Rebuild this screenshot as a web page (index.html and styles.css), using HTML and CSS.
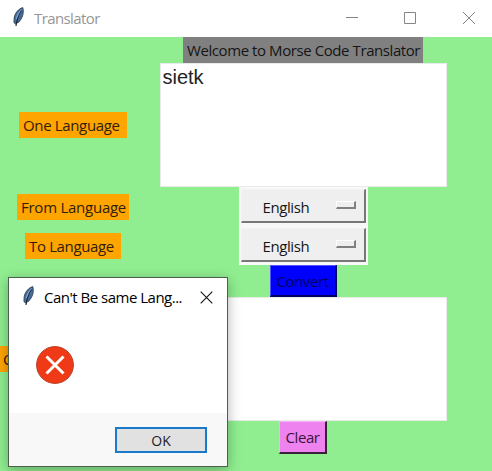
FILE: index.html
```html
<!DOCTYPE html>
<html lang="en">
<head>
<meta charset="utf-8">
<title>Translator</title>
<link rel="stylesheet" href="styles.css">
</head>
<body>
<svg class="defs" width="0" height="0" aria-hidden="true">
  <symbol id="feather" viewBox="0 0 14 20">
    <path d="M11.800.6C8 1.500 4 6 3.200 10.500L2.900 15.500l1.500 1.400 3.600-2C11.400 11 13.300 6 11.800.6Z" fill="#456d9f" stroke="#263348" stroke-width=".8"/>
    <path d="M10.700 2C7.500 4.500 5.500 8.500 4.700 13l2-2.400C9.200 8 10.700 5 10.700 2Z" fill="#91b5df"/>
    <path d="M10.500 3.500C7.500 8 5.800 13 5 19" fill="none" stroke="#172332" stroke-width="1.100"/>
  </symbol>
</svg>
<main class="window">
  <header class="titlebar">
    <svg class="feather"><use href="#feather"/></svg>
    <h1 class="title">Translator</h1>
    <svg class="controls" viewBox="0 0 146 36" fill="none" stroke="#858585">
      <path d="M0 17.500h12M58.500 12.500h11v11h-11zM117 12l12 12M129 12l-12 12"/>
    </svg>
  </header>
  <section class="form">
    <div class="label welcome">Welcome to Morse Code Translator</div>
    <div class="label tag one">One Language</div>
    <div class="textbox">sietk</div>
    <div class="label tag from">From Language</div>
    <div class="option"><div class="menu"><span>English</span><i class="indicator"></i></div></div>
    <div class="label tag to">To Language</div>
    <div class="option"><div class="menu"><span>English</span><i class="indicator"></i></div></div>
    <button class="button convert">Convert</button>
    <div class="label tag converted">Converted Language</div>
    <div class="textbox"></div>
    <button class="button clear">Clear</button>
  </section>
  <section class="dialog">
    <header class="dialog-bar">
      <svg class="feather"><use href="#feather"/></svg>
      <h2 class="dialog-title">Can't Be same Lang...</h2>
      <svg class="close" viewBox="0 0 13 13"><path d="M.7.700l11.600 11.600M12.300.700L.7 12.300" stroke="#111" stroke-width="1.100"/></svg>
    </header>
    <div class="dialog-body">
      <svg class="error" viewBox="0 0 38 38">
        <circle cx="19" cy="19" r="18.400" fill="#f03a17" stroke="#b83e26" stroke-width="1"/>
        <path d="M10.500 10.500l17 17M27.500 10.500l-17 17" stroke="#fff" stroke-width="3"/>
      </svg>
    </div>
    <footer class="dialog-footer"><button class="ok">OK</button></footer>
  </section>
</main>
</body>
</html>
```
FILE: styles.css
```css
* { box-sizing: border-box; }
body {
  margin: 0;
  overflow: hidden;
  font: 15px/20px "Open Sans", "Noto Sans", sans-serif;
  letter-spacing: -0.42px;
  color: #151515;
}
.defs { position: absolute; }
.window { position: relative; width: 492px; height: 471px; overflow: hidden; background: #90ee90; }
.titlebar { display: flex; height: 37px; padding-left: 11px; background: #fff; }
.feather { width: 14px; height: 20px; margin-top: 7px; flex: none; }
.title { margin: 8px 0 0 9px; font-size: 15px; font-weight: 400; letter-spacing: -0.6px; color: #969696; }
.controls { width: 146px; height: 36px; margin-left: auto; }
.form {
  display: grid;
  grid-template-columns: 146px 314px;
  grid-template-rows: 26px 124px 39px 39px 32px 124px 33px;
  place-items: center;
}
.label { height: 26px; padding-left: 4px; line-height: 26px; white-space: nowrap; }
.welcome { grid-column: 2; width: 240px; background: #808080; }
.tag { background: #ffa500; color: #30200b; letter-spacing: -0.35px; }
.one { width: 108px; }
.from { width: 112px; letter-spacing: -0.25px; }
.to { width: 96px; }
.converted { width: 146px; padding-left: 3px; }
.textbox {
  width: 287px;
  height: 124px;
  padding: 2px 2px;
  border: 1px solid #e8ece8;
  background: #fff;
  font: 20px/22px "Liberation Sans", sans-serif;
  letter-spacing: 0;
  color: #222;
}
.option { width: 129px; height: 39px; padding: 2px; background: #f8f8f8; }
.menu {
  display: flex;
  align-items: center;
  justify-content: space-between;
  height: 34px;
  padding: 2px 8px 0 21px;
  border: solid;
  border-color: #f2f2f2 #777 #777 #f2f2f2;
  border-width: 1px 2px 2px 1px;
  background: #efefef;
}
.indicator { width: 20px; height: 8px; margin-bottom: 3px; border: solid; border-width: 1px 2px 2px 1px; border-color: #fff #808080 #808080 #fff; }
.button { padding: 0; border: 2px solid; font: inherit; letter-spacing: inherit; }
.convert { grid-column: 2; width: 67px; height: 32px; background: #00f; border-color: #5353ff #000060 #000060 #5353ff; border-width: 1px 2px 2px 1px; color: #000060; }
.clear { grid-column: 2; width: 48px; height: 33px; background: #ee82ee; border-color: #f6b4f6 #382038 #382038 #f6b4f6; border-width: 1px 2px 2px 1px; color: #3b153b; }
.dialog {
  position: absolute;
  left: 8px;
  top: 277px;
  width: 220px;
  height: 190px;
  border: 1px solid #4d604d;
  background: #fff;
  box-shadow: 0 3px 12px rgba(0, 0, 0, .3);
}
.dialog-bar { display: flex; padding-left: 12px; }
.dialog-bar .feather { margin-top: 8px; }
.dialog-title { margin: 9px 0 0 9px; font-size: 15px; font-weight: 400; letter-spacing: -0.5px; white-space: nowrap; color: #000; }
.close { width: 13px; height: 13px; margin: 13px 14px 0 auto; }
.dialog-body { padding: 39px 0 0 27px; height: 106px; }
.error { display: block; width: 38px; height: 38px; }
.dialog-footer { height: 53px; padding: 14px 20px 0 0; background: #f8f8f8; }
.ok { display: block; margin-left: auto; width: 92px; height: 26px; padding: 1px 0 0; border: 2px solid #1979ca; background: #e1e1e1; font: inherit; font-size: 14px; letter-spacing: 0; color: #222; }
```
